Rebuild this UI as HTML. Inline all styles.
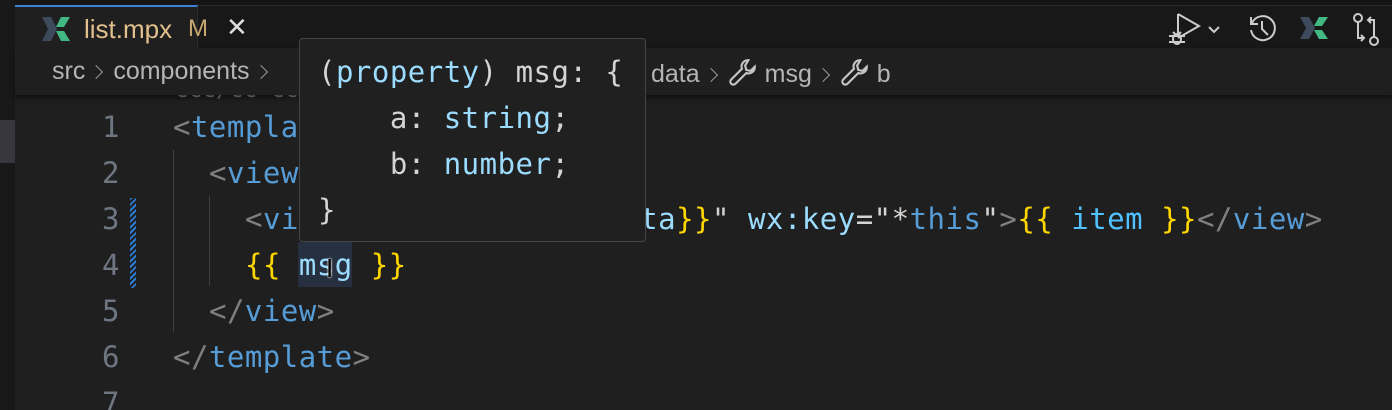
<!DOCTYPE html>
<html style="overflow:hidden;width:1392px;height:410px"><head><meta charset="utf-8"><style>
*{margin:0;padding:0;box-sizing:border-box}
body{width:1392px;height:410px;overflow:hidden;background:#1f1f1f;position:relative;font-family:"Liberation Sans",sans-serif}
.abs{position:absolute}
.mono{font-family:"DejaVu Sans Mono","Liberation Mono",monospace;font-size:29px;white-space:pre;letter-spacing:0.5px}
.line{position:absolute;left:0;height:46px;line-height:46px}
.ln{position:absolute;width:120px;text-align:right;color:#6e7681}
.code{position:absolute}
.g{color:#808080}.t{color:#569cd6}.a{color:#9cdcfe}.y{color:#ffd700}.w{color:#d4d4d4}.v{color:#9cdcfe}
.sep{display:inline-block;width:10px;height:10px;border-right:1.5px solid #999;border-top:1.5px solid #999;transform:rotate(45deg);margin:0 12px 0 6px;vertical-align:2px}
</style></head><body>
<div class="abs" style="left:0;top:0;width:1392px;height:5px;background:#151515"></div>
<div class="abs" style="left:0;top:5px;width:1392px;height:43px;background:#181818;border-top:1px solid #2a2a2a"></div>
<div class="abs" style="left:0;top:0;width:15px;height:410px;background:#181818"></div>
<div class="abs" style="left:0;top:120px;width:15px;height:43px;background:#37373d"></div>
<div class="abs" style="left:15px;top:5px;width:183px;height:44px;background:#1f1f1f;border-top:2px solid #3b82d6;border-right:1px solid #2b2b2b"></div>
<svg class="abs" style="left:42px;top:17px" width="28" height="24" viewBox="0 0 28 24"><path d="M0 0h9l6 12-6 12H0l6-12z" fill="#3d4a5c"/><path d="M28 0h-9l-5 10h8zM28 24h-9l-5-10h8z" fill="#42b883"/></svg>
<div class="abs" style="left:84px;top:14px;font-size:26px;color:#e2c08d">list.mpx</div>
<div class="abs" style="left:188px;top:15px;font-size:24px;color:#c8a86f">M</div>
<div class="abs" style="left:226px;top:12px;font-size:26px;color:#ddd">✕</div>
<svg class="abs" style="left:1165px;top:12px" width="62" height="34" viewBox="0 0 62 34" fill="none" stroke="#ccc" stroke-width="2"><path d="M13 2v20M13 2l21 12-21 12"/><ellipse cx="12" cy="27" rx="4" ry="5"/><path d="M4 24h16M4 30h16M8 20l2 2M16 20l-2 2"/><path d="M44 15l5 5 5-5"/></svg>
<svg class="abs" style="left:1247px;top:13px" width="30" height="30" viewBox="0 0 30 30" fill="none" stroke="#ccc" stroke-width="2"><path d="M5 10A12 12 0 1 1 4 17"/><path d="M4 4v7h7"/><path d="M15 8v8l6 6"/></svg>
<svg class="abs" style="left:1300px;top:17px" width="28" height="22" viewBox="0 0 28 22"><path d="M0 0h9l6 11-6 11H0l6-11z" fill="#3d4a5c"/><path d="M28 0h-9l-5 9h8zM28 22h-9l-5-9h8z" fill="#42b883"/></svg>
<svg class="abs" style="left:1350px;top:12px" width="32" height="34" viewBox="0 0 32 34" fill="none" stroke="#ccc" stroke-width="2"><circle cx="8" cy="6" r="4"/><circle cx="24" cy="29" r="4"/><path d="M8 10v16h6M11 23l3 3-3 3M24 25V8h-6M21 5l-3 3 3 3"/></svg>
<div class="abs" style="left:15px;top:48px;width:1377px;height:47px;background:#1f1f1f;box-shadow:0 3px 4px #111"></div>
<div class="abs" style="left:52px;top:57px;font-size:25px;color:#b5b5b5;white-space:pre">src<span class="sep"></span>components<span class="sep"></span></div>
<div class="abs" style="left:651px;top:57px;font-size:25px;color:#b5b5b5;white-space:pre">data<span class="sep"></span><svg width="30" height="30" viewBox="0 0 28 28" style="vertical-align:-5px" fill="none" stroke="#c5c5c5" stroke-width="2"><path d="M19 3a6 6 0 0 0-6 8L3 21a2.5 2.5 0 0 0 4 4l10-10a6 6 0 0 0 8-6l-4 4-4-1-1-4z"/></svg> msg<span class="sep"></span><svg width="30" height="30" viewBox="0 0 28 28" style="vertical-align:-5px" fill="none" stroke="#c5c5c5" stroke-width="2"><path d="M19 3a6 6 0 0 0-6 8L3 21a2.5 2.5 0 0 0 4 4l10-10a6 6 0 0 0 8-6l-4 4-4-1-1-4z"/></svg> b</div>
<div class="abs mono" style="left:175px;top:78px;color:#555;font-size:22px;clip-path:inset(17px 0 0 0)">ccc/cc cc</div>
<div class="abs" style="left:173px;top:150px;width:1px;height:182px;background:#404040"></div>
<div class="abs" style="left:209px;top:196px;width:1px;height:90px;background:#404040"></div>
<div class="abs" style="left:130px;top:198px;width:6px;height:90px;background:repeating-linear-gradient(135deg,#2b7bd6 0 2px,transparent 2px 4px)"></div>
<div class="abs" style="left:298px;top:242px;width:54px;height:45px;background:#263040"></div>
<div class="mono">
<div class="line" style="top:104px"><span class="ln">1</span><span class="code" style="left:173px"><span class="g">&lt;</span><span class="t">template</span><span class="g">&gt;</span></span></div>
<div class="line" style="top:150px"><span class="ln">2</span><span class="code" style="left:209px"><span class="g">&lt;</span><span class="t">view</span><span class="g">&gt;</span></span></div>
<div class="line" style="top:196px"><span class="ln">3</span><span class="code" style="left:245px"><span class="g">&lt;</span><span class="t">view</span> <span class="a">wx:for</span><span class="w">="</span><span class="y">{{</span><span class="v">listData</span><span class="y">}}</span><span class="w">"</span> <span class="a">wx:key</span><span class="w">="*</span><span class="t">this</span><span class="w">"</span><span class="g">&gt;</span><span class="y">{{</span> <span style="color:#4fc1ff">item</span> <span class="y">}}</span><span class="g">&lt;/</span><span class="t">view</span><span class="g">&gt;</span></span></div>
<div class="line" style="top:242px"><span class="ln">4</span><span class="code" style="left:245px"><span class="y">{{</span> <span class="v">msg</span> <span class="y">}}</span></span></div>
<div class="line" style="top:288px"><span class="ln">5</span><span class="code" style="left:209px"><span class="g">&lt;/</span><span class="t">view</span><span class="g">&gt;</span></span></div>
<div class="line" style="top:334px"><span class="ln">6</span><span class="code" style="left:173px"><span class="g">&lt;/</span><span class="t">template</span><span class="g">&gt;</span></span></div>
<div class="line" style="top:380px"><span class="ln">7</span></div>
</div>
<div class="abs" style="left:326px;top:252px;width:18px;height:32px;font-size:26px;color:#000;text-shadow:0 0 2px #fff,0 0 2px #fff;line-height:32px">I</div>
<div class="abs mono" style="left:299px;top:38px;width:347px;height:204px;background:#202020;border:1.5px solid #454545;border-radius:4px">
<div class="line" style="top:10px;left:18px"><span class="w">(</span><span class="a">property</span><span class="w">) msg: {</span></div>
<div class="line" style="top:56px;left:18px"><span class="w">    a: </span><span class="a">string</span><span class="w">;</span></div>
<div class="line" style="top:102px;left:18px"><span class="w">    b: </span><span class="a">number</span><span class="w">;</span></div>
<div class="line" style="top:148px;left:18px"><span class="w">}</span></div>
</div>
</body></html>
